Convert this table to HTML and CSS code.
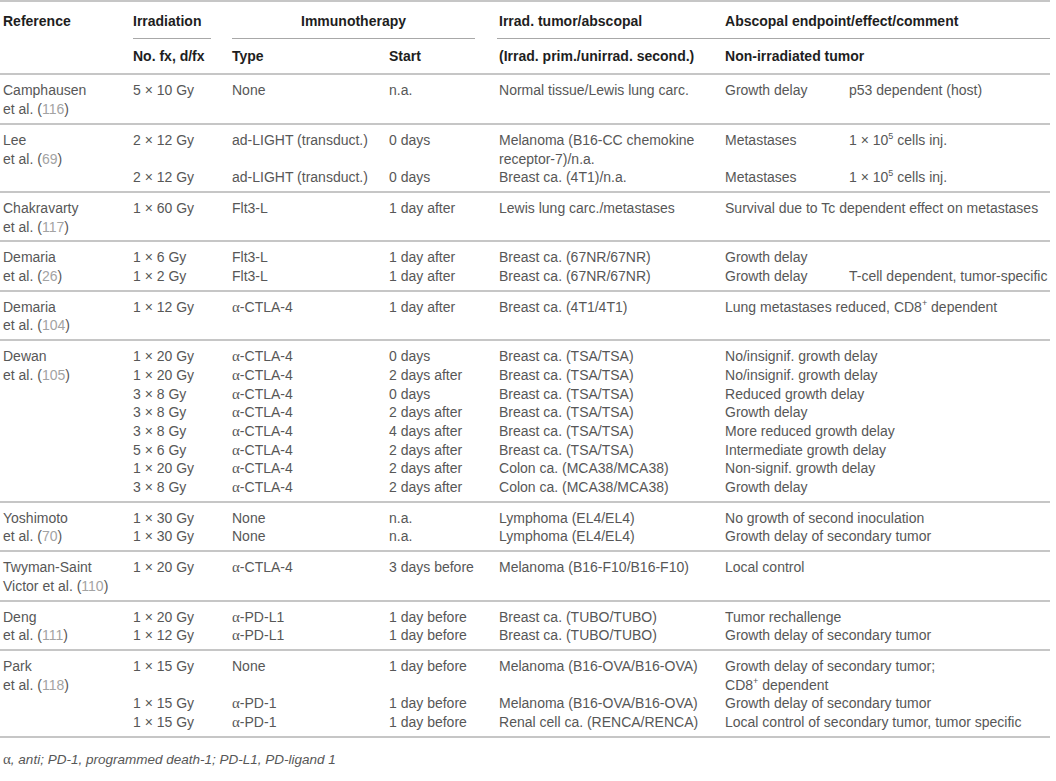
FILE: index.html
```html
<!DOCTYPE html>
<html>
<head>
  <meta charset="utf-8">
  <link rel="stylesheet" href="styles.css">
</head>
<body>
  <table class="data">
    <colgroup>
      <col class="c-ref">
      <col class="c-irr">
      <col class="c-type">
      <col class="c-start">
      <col class="c-tumor">
      <col class="c-effect">
      <col class="c-comment">
    </colgroup>
    <thead>
      <tr class="head-top">
        <th class="ref">Reference</th>
        <th class="grp-irr"><div class="rule">Irradiation</div></th>
        <th colspan="2" class="grp-immuno"><div class="rule">Immunotherapy</div></th>
        <th class="grp-tumor"><div class="rule">Irrad. tumor/abscopal</div></th>
        <th colspan="2" class="grp-effect"><div class="rule">Abscopal endpoint/effect/comment</div></th>
      </tr>
      <tr class="head-sub">
        <th class="ref"></th>
        <th>No. fx, d/fx</th>
        <th>Type</th>
        <th>Start</th>
        <th>(Irrad. prim./unirrad. second.)</th>
        <th colspan="2">Non-irradiated tumor</th>
      </tr>
    </thead>

    <tbody>
      <tr>
        <td class="ref">Camphausen<br>et al. (<span class="cite">116</span>)</td>
        <td>5 × 10 Gy</td>
        <td>None</td>
        <td>n.a.</td>
        <td>Normal tissue/Lewis lung carc.</td>
        <td>Growth delay</td>
        <td>p53 dependent (host)</td>
      </tr>
    </tbody>

    <tbody>
      <tr>
        <td class="ref" rowspan="2">Lee<br>et al. (<span class="cite">69</span>)</td>
        <td>2 × 12 Gy</td>
        <td>ad-LIGHT (transduct.)</td>
        <td>0 days</td>
        <td>Melanoma (B16-CC chemokine<br>receptor-7)/n.a.</td>
        <td>Metastases</td>
        <td>1 × 10<sup>5</sup> cells inj.</td>
      </tr>
      <tr>
        <td>2 × 12 Gy</td>
        <td>ad-LIGHT (transduct.)</td>
        <td>0 days</td>
        <td>Breast ca. (4T1)/n.a.</td>
        <td>Metastases</td>
        <td>1 × 10<sup>5</sup> cells inj.</td>
      </tr>
    </tbody>

    <tbody>
      <tr>
        <td class="ref">Chakravarty<br>et al. (<span class="cite">117</span>)</td>
        <td>1 × 60 Gy</td>
        <td>Flt3-L</td>
        <td>1 day after</td>
        <td>Lewis lung carc./metastases</td>
        <td colspan="2">Survival due to Tc dependent effect on metastases</td>
      </tr>
    </tbody>

    <tbody>
      <tr>
        <td class="ref" rowspan="2">Demaria<br>et al. (<span class="cite">26</span>)</td>
        <td>1 × 6 Gy</td>
        <td>Flt3-L</td>
        <td>1 day after</td>
        <td>Breast ca. (67NR/67NR)</td>
        <td>Growth delay</td>
        <td></td>
      </tr>
      <tr>
        <td>1 × 2 Gy</td>
        <td>Flt3-L</td>
        <td>1 day after</td>
        <td>Breast ca. (67NR/67NR)</td>
        <td>Growth delay</td>
        <td>T-cell dependent, tumor-specific</td>
      </tr>
    </tbody>

    <tbody>
      <tr>
        <td class="ref">Demaria<br>et al. (<span class="cite">104</span>)</td>
        <td>1 × 12 Gy</td>
        <td><span class="greek">α</span>-CTLA-4</td>
        <td>1 day after</td>
        <td>Breast ca. (4T1/4T1)</td>
        <td colspan="2">Lung metastases reduced, CD8<sup>+</sup> dependent</td>
      </tr>
    </tbody>

    <tbody>
      <tr>
        <td class="ref" rowspan="8">Dewan<br>et al. (<span class="cite">105</span>)</td>
        <td>1 × 20 Gy</td>
        <td><span class="greek">α</span>-CTLA-4</td>
        <td>0 days</td>
        <td>Breast ca. (TSA/TSA)</td>
        <td colspan="2">No/insignif. growth delay</td>
      </tr>
      <tr>
        <td>1 × 20 Gy</td>
        <td><span class="greek">α</span>-CTLA-4</td>
        <td>2 days after</td>
        <td>Breast ca. (TSA/TSA)</td>
        <td colspan="2">No/insignif. growth delay</td>
      </tr>
      <tr>
        <td>3 × 8 Gy</td>
        <td><span class="greek">α</span>-CTLA-4</td>
        <td>0 days</td>
        <td>Breast ca. (TSA/TSA)</td>
        <td colspan="2">Reduced growth delay</td>
      </tr>
      <tr>
        <td>3 × 8 Gy</td>
        <td><span class="greek">α</span>-CTLA-4</td>
        <td>2 days after</td>
        <td>Breast ca. (TSA/TSA)</td>
        <td colspan="2">Growth delay</td>
      </tr>
      <tr>
        <td>3 × 8 Gy</td>
        <td><span class="greek">α</span>-CTLA-4</td>
        <td>4 days after</td>
        <td>Breast ca. (TSA/TSA)</td>
        <td colspan="2">More reduced growth delay</td>
      </tr>
      <tr>
        <td>5 × 6 Gy</td>
        <td><span class="greek">α</span>-CTLA-4</td>
        <td>2 days after</td>
        <td>Breast ca. (TSA/TSA)</td>
        <td colspan="2">Intermediate growth delay</td>
      </tr>
      <tr>
        <td>1 × 20 Gy</td>
        <td><span class="greek">α</span>-CTLA-4</td>
        <td>2 days after</td>
        <td>Colon ca. (MCA38/MCA38)</td>
        <td colspan="2">Non-signif. growth delay</td>
      </tr>
      <tr>
        <td>3 × 8 Gy</td>
        <td><span class="greek">α</span>-CTLA-4</td>
        <td>2 days after</td>
        <td>Colon ca. (MCA38/MCA38)</td>
        <td colspan="2">Growth delay</td>
      </tr>
    </tbody>

    <tbody>
      <tr>
        <td class="ref" rowspan="2">Yoshimoto<br>et al. (<span class="cite">70</span>)</td>
        <td>1 × 30 Gy</td>
        <td>None</td>
        <td>n.a.</td>
        <td>Lymphoma (EL4/EL4)</td>
        <td colspan="2">No growth of second inoculation</td>
      </tr>
      <tr>
        <td>1 × 30 Gy</td>
        <td>None</td>
        <td>n.a.</td>
        <td>Lymphoma (EL4/EL4)</td>
        <td colspan="2">Growth delay of secondary tumor</td>
      </tr>
    </tbody>

    <tbody>
      <tr>
        <td class="ref">Twyman-Saint<br>Victor et al. (<span class="cite">110</span>)</td>
        <td>1 × 20 Gy</td>
        <td><span class="greek">α</span>-CTLA-4</td>
        <td>3 days before</td>
        <td>Melanoma (B16-F10/B16-F10)</td>
        <td colspan="2">Local control</td>
      </tr>
    </tbody>

    <tbody>
      <tr>
        <td class="ref" rowspan="2">Deng<br>et al. (<span class="cite">111</span>)</td>
        <td>1 × 20 Gy</td>
        <td><span class="greek">α</span>-PD-L1</td>
        <td>1 day before</td>
        <td>Breast ca. (TUBO/TUBO)</td>
        <td colspan="2">Tumor rechallenge</td>
      </tr>
      <tr>
        <td>1 × 12 Gy</td>
        <td><span class="greek">α</span>-PD-L1</td>
        <td>1 day before</td>
        <td>Breast ca. (TUBO/TUBO)</td>
        <td colspan="2">Growth delay of secondary tumor</td>
      </tr>
    </tbody>

    <tbody>
      <tr>
        <td class="ref" rowspan="3">Park<br>et al. (<span class="cite">118</span>)</td>
        <td>1 × 15 Gy</td>
        <td>None</td>
        <td>1 day before</td>
        <td>Melanoma (B16-OVA/B16-OVA)</td>
        <td colspan="2">Growth delay of secondary tumor;<br>CD8<sup>+</sup> dependent</td>
      </tr>
      <tr>
        <td>1 × 15 Gy</td>
        <td><span class="greek">α</span>-PD-1</td>
        <td>1 day before</td>
        <td>Melanoma (B16-OVA/B16-OVA)</td>
        <td colspan="2">Growth delay of secondary tumor</td>
      </tr>
      <tr>
        <td>1 × 15 Gy</td>
        <td><span class="greek">α</span>-PD-1</td>
        <td>1 day before</td>
        <td>Renal cell ca. (RENCA/RENCA)</td>
        <td colspan="2">Local control of secondary tumor, tumor specific</td>
      </tr>
    </tbody>
  </table>

  <p class="note"><span class="greek">α</span>, anti; PD-1, programmed death-1; PD-L1, PD-ligand 1</p>
</body>
</html>
```

FILE: styles.css
```css
* {
    box-sizing: border-box;
}

body {
    margin: 0;
    background-color: #fff;
    font-family: "Liberation Sans", Arial, sans-serif;
    font-size: 14px;
    color: #575757;
}

.data {
    width: 1050px;
    border-collapse: collapse;
    table-layout: fixed;
    border-top: 2px solid #c6c6c6;
}

.c-ref { width: 125px; }
.c-irr { width: 99px; }
.c-type { width: 157px; }
.c-start { width: 110px; }
.c-tumor { width: 226px; }
.c-effect { width: 124px; }
.c-comment { width: 209px; }

.data th,
.data td {
    padding: 0 8px;
    text-align: left;
    vertical-align: top;
    line-height: 18.7px;
    white-space: nowrap;
}

.data .ref {
    padding-left: 3px;
}

.data th {
    color: #1e1e1e;
    font-weight: bold;
}

.head-top th {
    padding-top: 10px;
}

.rule {
    border-bottom: 1px solid #a8a8a8;
    padding-bottom: 7px;
}

.grp-irr {
    padding-right: 13px !important;
}

.grp-immuno {
    text-align: center !important;
    padding-right: 16px !important;
}

.grp-tumor {
    padding-left: 6px !important;
    padding-right: 0 !important;
}

.grp-tumor .rule {
    padding-left: 2px;
}

.grp-effect {
    padding-left: 0 !important;
    padding-right: 0 !important;
}

.grp-effect .rule {
    padding-left: 8px;
}

.head-sub th {
    padding-top: 8px;
    padding-bottom: 8px;
    border-bottom: 2px solid #c6c6c6;
}

.data tbody {
    border-bottom: 2px solid #c6c6c6;
}

.data tbody tr:first-child td {
    padding-top: 6px;
}

.data tbody tr:last-child td {
    padding-bottom: 4px;
}

.cite {
    color: #a3a3a3;
}

.greek {
    font-family: "Liberation Serif", serif;
    font-style: normal;
    font-size: 15px;
}

sup {
    font-size: 9px;
    line-height: 0;
}

.note {
    margin: 13px 0 0 3px;
    font-style: italic;
    font-size: 13.5px;
}
```
